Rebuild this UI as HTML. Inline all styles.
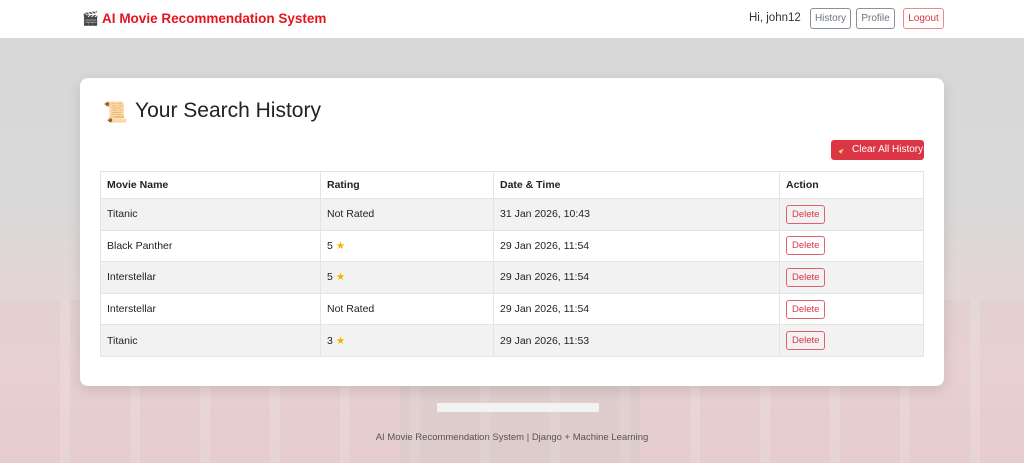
<!DOCTYPE html>
<html><head><meta charset="utf-8"><style>
*{box-sizing:border-box;margin:0;padding:0}
body{width:1024px;height:463px;overflow:hidden;font-family:"Liberation Sans","DejaVu Sans",sans-serif;position:relative;
background:linear-gradient(#d8d8d8 0px,#d9d9d9 200px,#e4d6d6 290px,#ead6d6 380px,#e8d2d2 463px);}
.seats{position:absolute;left:0;top:300px;width:1024px;height:163px;
background:repeating-linear-gradient(90deg,rgba(200,110,110,.06) 0 60px,rgba(255,255,255,.03) 60px 70px);}
.mid{position:absolute;left:400px;top:380px;width:240px;height:83px;background:rgba(200,200,200,.25)}
.screen{position:absolute;left:437px;top:403px;width:162px;height:9px;background:#f2f2f2;border-radius:1px}
nav{position:absolute;left:0;top:0;width:1024px;height:38px;background:#fff}
.brand{position:absolute;left:82px;top:11px;font-size:13.5px;font-weight:bold;color:#e4141e}
.hi{position:absolute;left:749px;top:12px;font-size:11.5px;color:#333}
.b{position:absolute;top:8px;height:21px;border:1px solid #8a9299;border-radius:3px;font-size:10px;color:#6c757d;line-height:19px;text-align:center}
.card{position:absolute;left:80px;top:78px;width:864px;height:308px;background:#fff;border-radius:8px;box-shadow:0 4px 14px rgba(0,0,0,.12)}
h1{position:absolute;left:135px;top:99px;font-size:21px;font-weight:normal;color:#222}
.clr{position:absolute;left:831px;top:140px;width:93px;height:20px;background:#dc3545;border-radius:3px;color:#fff;font-size:10px;line-height:20px;padding-left:21px}
.clr span{position:absolute;left:7px;top:0;font-size:8px}
table{position:absolute;left:100px;top:171px;width:824px;border-collapse:collapse;font-size:10.5px;color:#222}
td,th{border:1px solid #e4e4e4;padding:0 6px;text-align:left;height:31.6px}
th{height:27px;font-weight:bold}
tr.g td{background:#f2f2f2}
.del{display:inline-block;border:1px solid #e06070;color:#dc3545;border-radius:3px;font-size:9.5px;padding:3px 5px}
.st{color:#f0b400}
footer{position:absolute;left:0;width:1024px;top:432px;text-align:center;font-size:9.5px;color:#555}
</style></head><body>
<div class="seats"></div><div class="mid"></div><div class="screen"></div>
<nav>
<div class="brand"><span style="color:#6b5b95">🎬</span> AI Movie Recommendation System</div>
<div class="hi">Hi, john12</div>
<div class="b" style="left:810px;width:41px">History</div>
<div class="b" style="left:856px;width:39px">Profile</div>
<div class="b" style="left:903px;width:41px;border-color:#e88;color:#dc3545">Logout</div>
</nav>
<div class="card"></div>
<div style="position:absolute;left:103px;top:100px;font-size:20px">📜</div>
<h1>Your Search History</h1>
<div class="clr"><span>🧹</span>Clear All History</div>
<table>
<tr><th style="width:220px">Movie Name</th><th style="width:173px">Rating</th><th style="width:286px">Date &amp; Time</th><th>Action</th></tr>
<tr class="g"><td>Titanic</td><td>Not Rated</td><td>31 Jan 2026, 10:43</td><td><span class="del">Delete</span></td></tr>
<tr><td>Black Panther</td><td>5 <span class="st">★</span></td><td>29 Jan 2026, 11:54</td><td><span class="del">Delete</span></td></tr>
<tr class="g"><td>Interstellar</td><td>5 <span class="st">★</span></td><td>29 Jan 2026, 11:54</td><td><span class="del">Delete</span></td></tr>
<tr><td>Interstellar</td><td>Not Rated</td><td>29 Jan 2026, 11:54</td><td><span class="del">Delete</span></td></tr>
<tr class="g"><td>Titanic</td><td>3 <span class="st">★</span></td><td>29 Jan 2026, 11:53</td><td><span class="del">Delete</span></td></tr>
</table>
<footer>AI Movie Recommendation System | Django + Machine Learning</footer>
</body></html>
